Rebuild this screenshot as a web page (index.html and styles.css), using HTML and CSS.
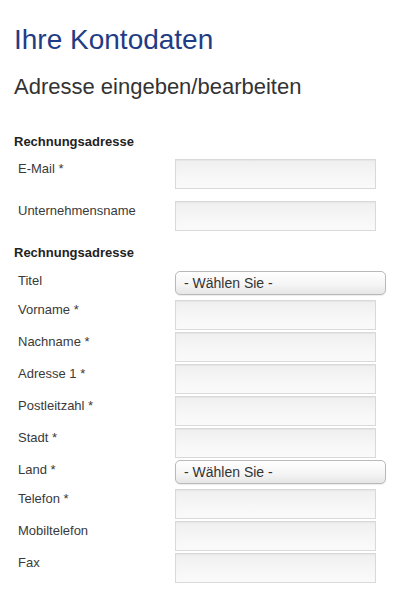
FILE: index.html
```html
<!DOCTYPE html>
<html lang="de">
<head>
<meta charset="utf-8">
<title>Ihre Kontodaten</title>
<link rel="stylesheet" href="styles.css">
</head>
<body>
<h1 class="page-title">Ihre Kontodaten</h1>
<h2 class="page-sub">Adresse eingeben/bearbeiten</h2>

<h3 class="sec-title sec-first">Rechnungsadresse</h3>
<div class="rows rows-wide">
  <div class="row"><label class="lbl">E-Mail *</label><input class="field" type="text"></div>
  <div class="row"><label class="lbl">Unternehmensname</label><input class="field" type="text"></div>
</div>

<h3 class="sec-title sec-second">Rechnungsadresse</h3>
<div class="rows rows-tight">
  <div class="row row-sel"><label class="lbl">Titel</label><select class="pick"><option>- Wählen Sie -</option></select></div>
  <div class="row"><label class="lbl">Vorname *</label><input class="field" type="text"></div>
  <div class="row"><label class="lbl">Nachname *</label><input class="field" type="text"></div>
  <div class="row"><label class="lbl">Adresse 1 *</label><input class="field" type="text"></div>
  <div class="row"><label class="lbl">Postleitzahl *</label><input class="field" type="text"></div>
  <div class="row"><label class="lbl">Stadt *</label><input class="field" type="text"></div>
  <div class="row row-sel"><label class="lbl">Land *</label><select class="pick"><option>- Wählen Sie -</option></select></div>
  <div class="row"><label class="lbl">Telefon *</label><input class="field" type="text"></div>
  <div class="row"><label class="lbl">Mobiltelefon</label><input class="field" type="text"></div>
  <div class="row"><label class="lbl">Fax</label><input class="field" type="text"></div>
</div>
</body>
</html>
```

FILE: styles.css
```css
html, body {
  margin: 0;
  background: #ffffff;
}
body {
  padding: 24px 14px 0;
  font-family: "Liberation Sans", Arial, sans-serif;
  color: #333333;
}
.page-title {
  margin: 0;
  font-size: 28px;
  line-height: 32px;
  font-weight: normal;
  color: #1f3c86;
}
.page-sub {
  margin: 18px 0 0;
  font-size: 22px;
  line-height: 26px;
  font-weight: normal;
  color: #333333;
}
.sec-title {
  margin: 0;
  font-size: 13px;
  line-height: 16px;
  font-weight: bold;
  color: #222222;
}
.sec-first { margin-top: 34px; }
.sec-second { margin-top: 14px; }
.rows {
  display: flex;
  flex-direction: column;
}
.rows-wide {
  margin-top: 9px;
  gap: 12px;
}
.rows-tight {
  margin-top: 10px;
  gap: 2px;
}
.row {
  display: flex;
  align-items: flex-start;
  padding-left: 4px;
}
.row-sel { margin-bottom: 3px; }
.lbl {
  width: 157px;
  flex: none;
  padding-top: 2px;
  font-size: 13px;
  line-height: 15px;
  color: #3a3a3a;
}
.field {
  box-sizing: border-box;
  width: 201px;
  height: 30px;
  margin: 0;
  padding: 0 6px;
  border: 1px solid #d9d9d9;
  border-radius: 0;
  background: linear-gradient(#efefef, #f7f7f7 60%, #fafafa);
  box-shadow: inset 0 1px 1px rgba(0, 0, 0, 0.04);
  font: 13px "Liberation Sans", Arial, sans-serif;
}
.pick {
  box-sizing: border-box;
  width: 211px;
  height: 24px;
  margin: 0;
  padding: 0 0 0 8px;
  -webkit-appearance: none;
  appearance: none;
  border: 1px solid #b9b9b9;
  border-radius: 5px;
  background: linear-gradient(#ffffff, #f4f4f4 60%, #e6e6e6);
  box-shadow: 0 1px 1px rgba(0, 0, 0, 0.08);
  font: 14px/16px "Liberation Sans", Arial, sans-serif;
  color: #333333;
}
```
